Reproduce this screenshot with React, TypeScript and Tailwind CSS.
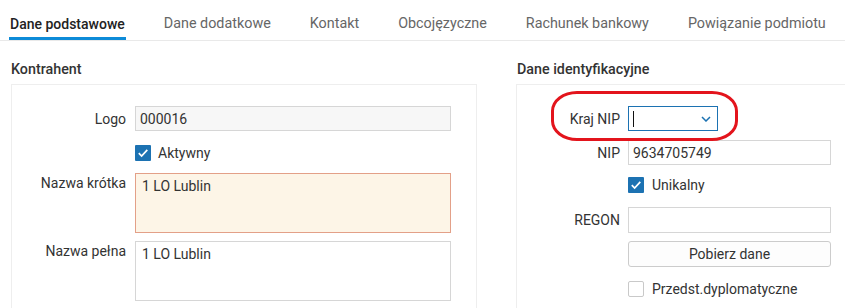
import React from "react";

function CheckBox({ checked }: { checked: boolean }) {
  return checked ? (
    <div className="w-[16px] h-[16px] bg-[#1c72b2] rounded-[1px] flex items-center justify-center shrink-0">
      <svg width="12" height="12" viewBox="0 0 12 12">
        <path d="M1.8 6.2 L4.6 9 L10.3 2.8" fill="none" stroke="#fff" strokeWidth="1.7" />
      </svg>
    </div>
  ) : (
    <div className="w-[16px] h-[16px] bg-white border border-[#c9c9c9] rounded-[2px] shrink-0" />
  );
}

const tabs = [
  "Dane podstawowe",
  "Dane dodatkowe",
  "Kontakt",
  "Obcojęzyczne",
  "Rachunek bankowy",
  "Powiązanie podmiotu",
];

export default function App() {
  return (
    <div className="w-[857px] h-[308px] overflow-hidden bg-white font-['Roboto',sans-serif] text-[14px] text-[#333]">
      {/* Tabs */}
      <div className="flex items-start h-[41px] w-[845px] border-b border-[#e9e9e9] pl-[9px] gap-[37px]">
        {tabs.map((t, i) => (
          <div
            key={t}
            className={
              i === 0
                ? "h-[40px] pt-[14px] px-[1px] leading-[20px] border-b-[3px] border-[#0d8bd8] font-medium text-[#222]"
                : "h-[40px] pt-[14px] px-[1px] leading-[20px] text-[14.35px] text-[#666]"
            }
          >
            {t}
          </div>
        ))}
      </div>

      {/* Body */}
      <div className="flex pl-[11px] gap-[39px]">
        {/* Left column */}
        <div className="w-[466px] shrink-0">
          <div className="mt-[18px] h-[20px] leading-[20px] font-medium text-[14.3px] text-[#333]">Kontrahent</div>
          <div className="mt-[5px] border border-[#eeeeee] h-[300px] pt-[21px]">
            <div className="flex items-center">
              <div className="w-[114px] text-right leading-[20px]">Logo</div>
              <div className="ml-[9px] w-[316px] h-[25px] bg-[#f7f7f7] border border-[#d6d6d6] pl-[4px] flex items-center leading-[20px]">
                000016
              </div>
            </div>
            <div className="mt-[14px] ml-[123px] flex items-center gap-[7px]">
              <CheckBox checked />
              <span className="leading-[16px]">Aktywny</span>
            </div>
            <div className="mt-[12px] flex items-start">
              <div className="w-[114px] text-right leading-[20px]">Nazwa krótka</div>
              <div className="ml-[9px] w-[316px] h-[60px] bg-[#fdf5e7] border border-[#e3a088] pl-[6px] pt-[2px] leading-[20px]">
                1 LO Lublin
              </div>
            </div>
            <div className="mt-[8px] flex items-start">
              <div className="w-[114px] text-right leading-[20px]">Nazwa pełna</div>
              <div className="ml-[9px] w-[316px] h-[60px] bg-white border border-[#d6d6d6] pl-[6px] pt-[2px] leading-[20px]">
                1 LO Lublin
              </div>
            </div>
          </div>
        </div>

        {/* Right column */}
        <div className="w-[329px] shrink-0">
          <div className="mt-[18px] h-[20px] leading-[20px] font-medium text-[14.3px] text-[#333] pl-[1px]">Dane identyfikacyjne</div>
          <div className="relative mt-[5px] border-l border-t border-[#eeeeee] h-[300px] pt-[21px]">
            <div className="flex items-center">
              <div className="w-[103px] text-right leading-[20px]">Kraj NIP</div>
              <div className="ml-[8px] w-[90px] h-[25px] bg-white border border-[#1c72b2] flex items-center justify-between pl-[4px] pr-[6px]">
                <div className="w-[1px] h-[16px] bg-[#111]" />
                <svg width="10" height="6" viewBox="0 0 10 6">
                  <path d="M1 1 L5 5 L9 1" fill="none" stroke="#1c72b2" strokeWidth="1.5" />
                </svg>
              </div>
            </div>
            <div className="mt-[9px] flex items-center">
              <div className="w-[103px] text-right leading-[20px]">NIP</div>
              <div className="ml-[8px] w-[203px] h-[25px] bg-white border border-[#d6d6d6] pl-[4px] flex items-center leading-[20px]">
                9634705749
              </div>
            </div>
            <div className="mt-[12px] ml-[111px] flex items-center gap-[8px]">
              <CheckBox checked />
              <span className="leading-[16px]">Unikalny</span>
            </div>
            <div className="mt-[14px] flex items-center">
              <div className="w-[103px] text-right leading-[20px]">REGON</div>
              <div className="ml-[8px] w-[203px] h-[26px] bg-white border border-[#d6d6d6]" />
            </div>
            <div className="mt-[8px] ml-[111px] w-[203px] h-[26px] bg-[#fdfdfd] border border-[#cccccc] rounded-[3px] flex items-center justify-center leading-[20px]">
              Pobierz dane
            </div>
            <div className="mt-[14px] ml-[111px] flex items-center gap-[8px]">
              <CheckBox checked={false} />
              <span className="leading-[16px]">Przedst.dyplomatyczne</span>
            </div>

            {/* Red annotation */}
            <div className="absolute left-[34px] top-[6px] w-[187px] h-[50px] border-[3px] border-[#e3141c] rounded-[26px/20px]" />
          </div>
        </div>
      </div>
    </div>
  );
}
